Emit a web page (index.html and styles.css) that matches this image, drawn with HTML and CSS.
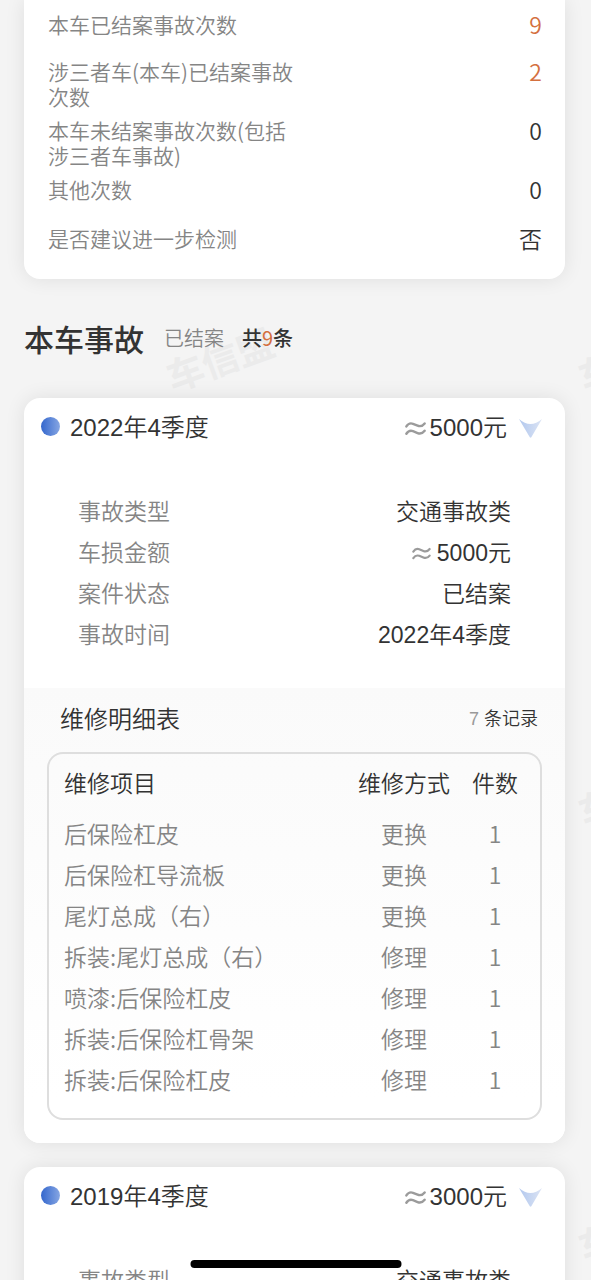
FILE: index.html
```html
<!DOCTYPE html>
<html lang="zh-CN">
<head>
<meta charset="utf-8">
<meta name="viewport" content="width=device-width, initial-scale=1">
<title>本车事故</title>
<link rel="stylesheet" href="styles.css">
</head>
<body>
<svg class="defs" aria-hidden="true">
  <defs>
    <linearGradient id="arrow-fill" x1="0" y1="0" x2="1" y2="0">
      <stop offset="0" stop-color="#b2c8ee"/>
      <stop offset="1" stop-color="#dce4f4"/>
    </linearGradient>
    <symbol id="approx" viewBox="0 0 20 16">
      <path d="M1.300 6C3 3.400 5.200 2.600 7.600 3.500L12 5.300C14.600 6.300 17 5.400 18.700 3.200M1.300 13C3 10.400 5.200 9.600 7.600 10.500L12 12.300C14.600 13.300 17 12.400 18.700 10.200" fill="none" stroke="#9b9b9b" stroke-width="2.300" stroke-linecap="round"/>
    </symbol>
    <symbol id="arrow" viewBox="0 0 23 19">
      <path d="M0 0Q11.500 10 23 0L12.300 18.300Q11.500 19 10.800 18.300Z" fill="url(#arrow-fill)"/>
    </symbol>
  </defs>
</svg>
<main class="page">
  <div class="watermarks" aria-hidden="true">
    <span class="watermark wm-1">车信盟</span>
    <span class="watermark wm-2">车信盟</span>
    <span class="watermark wm-3">车信盟</span>
    <span class="watermark wm-4">车信盟</span>
  </div>

  <section class="card summary">
    <dl class="summary-list">
      <div class="summary-row"><dt>本车已结案事故次数</dt><dd class="accent">9</dd></div>
      <div class="summary-row"><dt>涉三者车(本车)已结案事故次数</dt><dd class="accent">2</dd></div>
      <div class="summary-row"><dt>本车未结案事故次数(包括涉三者车事故)</dt><dd>0</dd></div>
      <div class="summary-row"><dt>其他次数</dt><dd>0</dd></div>
      <div class="summary-row"><dt>是否建议进一步检测</dt><dd>否</dd></div>
    </dl>
  </section>

  <header class="section-head">
    <h1>本车事故</h1>
    <span class="state">已结案</span>
    <span class="count">共<b class="accent">9</b>条</span>
  </header>

  <article class="card">
    <button class="card-head" type="button" aria-expanded="true">
      <span class="dot"></span>
      <span class="period">2022年4季度</span>
      <svg class="approx" aria-hidden="true"><use href="#approx"/></svg>
      <span class="amount">5000元</span>
      <svg class="arrow" aria-hidden="true"><use href="#arrow"/></svg>
    </button>
    <dl class="details">
      <div class="detail"><dt>事故类型</dt><dd>交通事故类</dd></div>
      <div class="detail"><dt>车损金额</dt><dd><svg class="approx small" aria-hidden="true"><use href="#approx"/></svg>5000元</dd></div>
      <div class="detail"><dt>案件状态</dt><dd>已结案</dd></div>
      <div class="detail"><dt>事故时间</dt><dd>2022年4季度</dd></div>
    </dl>
    <section class="repairs">
      <div class="repairs-head">
        <h2>维修明细表</h2>
        <span class="records"><span class="num">7</span> 条记录</span>
      </div>
      <div class="table-box">
        <table>
          <thead><tr><th class="item">维修项目</th><th class="method">维修方式</th><th class="qty">件数</th></tr></thead>
          <tbody>
            <tr><td class="item">后保险杠皮</td><td>更换</td><td>1</td></tr>
            <tr><td class="item">后保险杠导流板</td><td>更换</td><td>1</td></tr>
            <tr><td class="item">尾灯总成（右）</td><td>更换</td><td>1</td></tr>
            <tr><td class="item">拆装:尾灯总成（右）</td><td>修理</td><td>1</td></tr>
            <tr><td class="item">喷漆:后保险杠皮</td><td>修理</td><td>1</td></tr>
            <tr><td class="item">拆装:后保险杠骨架</td><td>修理</td><td>1</td></tr>
            <tr><td class="item">拆装:后保险杠皮</td><td>修理</td><td>1</td></tr>
          </tbody>
        </table>
      </div>
    </section>
  </article>

  <article class="card">
    <button class="card-head" type="button" aria-expanded="true">
      <span class="dot"></span>
      <span class="period">2019年4季度</span>
      <svg class="approx" aria-hidden="true"><use href="#approx"/></svg>
      <span class="amount">3000元</span>
      <svg class="arrow" aria-hidden="true"><use href="#arrow"/></svg>
    </button>
    <dl class="details">
      <div class="detail"><dt>事故类型</dt><dd>交通事故类</dd></div>
    </dl>
  </article>
</main>
<div class="home-bar"></div>
</body>
</html>
```
FILE: styles.css
```css
* { box-sizing: border-box; }

body {
  margin: 0;
  background: #f4f4f4;
  color: #333;
  font-family: "Liberation Sans", "Noto Sans CJK SC", sans-serif;
  font-weight: 350;
}

dl, dd, h1, h2 { margin: 0; }

.defs { position: absolute; width: 0; height: 0; }

.page {
  position: relative;
  height: 100vh;
  overflow: hidden;
  padding: 0 26px 0 24px;
}

.watermarks { position: absolute; inset: 0; overflow: hidden; }

.watermark {
  position: absolute;
  color: #ebebeb;
  font: 700 37px/40px "Noto Sans CJK SC", sans-serif;
  white-space: nowrap;
  transform: rotate(-20deg);
}
.wm-1 { left: 164px; top: 338px; }
.wm-2 { left: 576px; top: 338px; }
.wm-3 { left: 576px; top: 773px; }
.wm-4 { left: 576px; top: 1208px; }

.card {
  position: relative;
  margin-bottom: 24px;
  border-radius: 16px;
  background: #fff;
  box-shadow: 0 0 20px rgba(0, 0, 0, 0.09);
}

.accent { color: #d4703f; }

.summary {
  margin-bottom: 0;
  padding: 12px 23px 8px 24px;
  border-radius: 0 0 16px 16px;
}

.summary-row {
  display: flex;
  justify-content: space-between;
  min-height: 47px;
  padding-bottom: 9px;
  font-family: "Noto Sans CJK SC", sans-serif;
  font-size: 21px;
  line-height: 25px;
}
.summary-row:last-child { padding: 2px 0 7px; }
.summary-row dt { width: 52%; color: #858585; }
.summary-row dd { font-size: 23px; }

.section-head {
  position: relative;
  display: flex;
  align-items: center;
  height: 119px;
  padding-bottom: 2px;
  font-family: "Noto Sans CJK SC", sans-serif;
}
.section-head h1 { font-size: 30px; font-weight: 500; }
.state { margin-left: 20px; color: #858585; font-size: 20px; }
.count { margin-left: 18px; font-size: 20px; font-weight: 500; }
.count b { font-weight: 400; }

.card-head {
  display: flex;
  align-items: center;
  width: 100%;
  height: 60px;
  padding: 0 23px 0 17px;
  border: 0;
  background: none;
  color: inherit;
  font: inherit;
  font-size: 24px;
  text-align: left;
}
.dot {
  width: 19px;
  height: 19px;
  margin: 0 10px 3px 0;
  border-radius: 50%;
  background: linear-gradient(90deg, #3467cd, #86a6e3);
}
.period, .amount { padding-bottom: 6px; }
.period { flex: 1; }
.approx { width: 21px; height: 17px; margin-right: 4px; }
.approx.small { width: 19px; height: 15px; margin-right: 6px; }
.arrow { width: 23px; height: 19px; margin-left: 12px; }

.details { padding: 34px 54px 32px; font-size: 23px; line-height: 41px; }
.detail { display: flex; justify-content: space-between; }
.detail dt { color: #858585; }

.repairs {
  padding: 0 23px 23px;
  border-radius: 0 0 16px 16px;
  background: linear-gradient(#fafafa, #fff 90%);
}
.repairs-head {
  display: flex;
  align-items: center;
  justify-content: space-between;
  height: 64px;
  padding: 0 4px 6px 13px;
}
.repairs-head h2 { font-size: 24px; font-weight: 350; }
.records { font-size: 18px; }
.num { color: #999; }

.table-box {
  padding: 0 5px 16px 15px;
  border: 2px solid #dedede;
  border-radius: 16px;
}
table {
  width: 100%;
  border-collapse: collapse;
  table-layout: fixed;
  font-family: "Noto Sans CJK SC", sans-serif;
  font-size: 23px;
  line-height: 37px;
}
th { height: 61px; padding: 0 0 4px; font-weight: 350; text-align: center; }
td { height: 41px; padding: 0 0 4px; color: #858585; text-align: center; }
th.item, td.item { text-align: left; }
.method { width: 102px; }
.qty { width: 80px; }

.home-bar {
  position: fixed;
  bottom: 12px;
  left: 50%;
  width: 211px;
  height: 8px;
  border-radius: 4px;
  background: #000;
  transform: translateX(-50%);
}
```
